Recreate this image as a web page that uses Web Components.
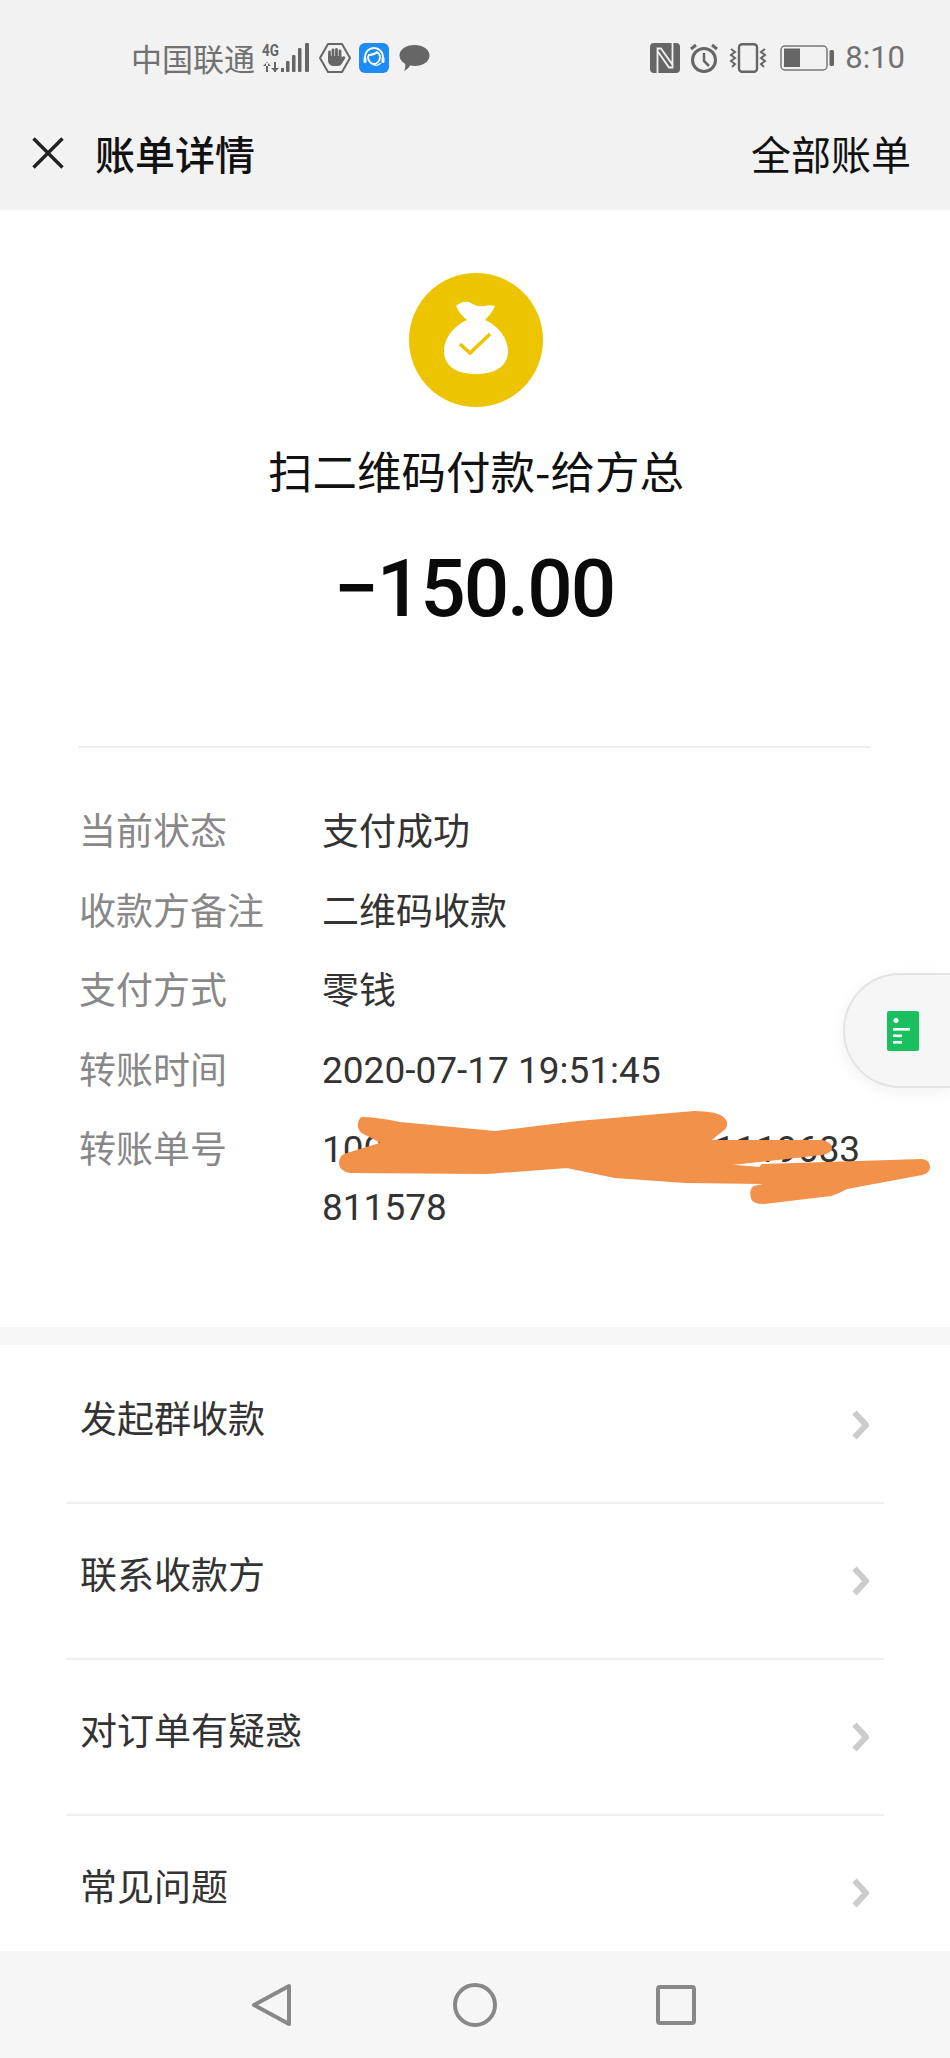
<!DOCTYPE html>
<html lang="zh">
<head>
<meta charset="utf-8">
<title>账单详情</title>
<style>
  html, body { margin: 0; padding: 0; background: #fff; }
  body { font-family: "Noto Sans CJK SC", "Noto Sans", sans-serif; }
  bill-page { width: 950px; height: 2058px; }
</style>
</head>
<body>
<bill-page>
  <status-bar carrier="中国联通" time="8:10"></status-bar>
  <nav-header heading="账单详情" action="全部账单"></nav-header>
  <bill-summary heading="扫二维码付款-给方总" amount="−150.00"></bill-summary>
  <bill-details>
    <detail-row label="当前状态">支付成功</detail-row>
    <detail-row label="收款方备注">二维码收款</detail-row>
    <detail-row label="支付方式">零钱</detail-row>
    <detail-row label="转账时间"><span class="num">2020-07-17 19:51:45</span></detail-row>
    <detail-row label="转账单号"><order-number start="100" end="1119683" last="811578"></order-number></detail-row>
  </bill-details>
  <link-list>
    <link-row>发起群收款</link-row>
    <link-row>联系收款方</link-row>
    <link-row>对订单有疑惑</link-row>
    <link-row>常见问题</link-row>
  </link-list>
  <system-nav></system-nav>
  <float-button></float-button>
  <paint-scribble></paint-scribble>
</bill-page>

<script>
const FONT = '"Noto Sans CJK SC", "Noto Sans", sans-serif';

class BillPage extends HTMLElement {
  constructor() {
    super();
    this.attachShadow({ mode: 'open' });
    this.shadowRoot.innerHTML = `
      <style>
        :host {
          display: flex;
          flex-direction: column;
          position: relative;
          overflow: hidden;
          background: #fff;
          font-family: ${FONT};
        }
      </style>
      <slot></slot>
    `;
  }
}

class StatusBar extends HTMLElement {
  constructor() {
    super();
    this.attachShadow({ mode: 'open' });
    this.shadowRoot.innerHTML = `
      <style>
        :host {
          display: flex;
          align-items: center;
          justify-content: space-between;
          height: 116px;
          padding: 0 45px 0 131px;
          background: #f2f2f2;
          color: #717171;
        }
        .group { display: flex; align-items: center; }
        .carrier { font-size: 31px; line-height: 44px; margin-right: 7px; }
        .time { font: 400 31px/44px Roboto, sans-serif; margin-left: 10px; }
        svg { display: block; flex: none; }
        .signal { width: 48px; height: 32px; }
        .hand { width: 32px; height: 32px; margin-left: 9px; }
        .app { width: 30px; height: 30px; margin-left: 8px; }
        .bubble { width: 31px; height: 28px; margin-left: 10px; }
        .nfc { width: 30px; height: 30px; }
        .alarm { width: 30px; height: 32px; margin-left: 9px; }
        .vibrate { width: 38px; height: 30px; margin-left: 10px; }
        .battery { width: 55px; height: 26px; margin-left: 13px; }
      </style>
      <div class="group">
        <span class="carrier"></span>
        <svg class="signal" viewBox="0 0 48 32" fill="#666">
          <text x="0" y="14" font-family="Roboto, sans-serif" font-size="17" font-weight="700" textLength="17" lengthAdjust="spacingAndGlyphs">4G</text>
          <path d="M4 20v10h2V20zM1 24l4-4 4 4zM12 20v10h2V20zM9 26l4 4 4-4z"/>
          <rect x="19" y="26" width="3" height="4"/>
          <rect x="24" y="19" width="3.5" height="11" rx="1"/>
          <rect x="30" y="13" width="3.5" height="17" rx="1"/>
          <rect x="36" y="6" width="3.5" height="24" rx="1"/>
          <rect x="43" y="1" width="4" height="29" rx="1"/>
        </svg>
        <svg class="hand" viewBox="0 0 32 32">
          <path d="M9 2h14l8 14-8 14H9L1 16z" fill="none" stroke="#666" stroke-width="2" stroke-linejoin="round"/>
          <path d="M10.500 16V10M14 15V8M17.500 15V7.500M21 15V9" fill="none" stroke="#666" stroke-width="2.800" stroke-linecap="round"/>
          <path d="M9 14h13.500v1.500l1.500-1c1.500-.8 3 .7 2 2l-3 5c-1 1.700-2.200 2.500-4.500 2.500h-3c-4 0-6.500-2-6.500-6z" fill="#666"/>
        </svg>
        <svg class="app" viewBox="0 0 30 30">
          <rect width="30" height="30" rx="6" fill="#1e8cf5"/>
          <path d="M6 17v-3c0-5 4-9 9-9s9 4 9 9v3" fill="none" stroke="#fff" stroke-width="2"/>
          <path d="M10 12c3 0 6-1 8-3 1.500 1 3 2 3 5 0 4-3 7-6 7s-6-3-6-7z" fill="#1e8cf5" stroke="#fff" stroke-width="1.800"/>
          <rect x="4.500" y="14" width="3" height="6" rx="1.500" fill="#fff"/>
          <rect x="22.500" y="14" width="3" height="6" rx="1.500" fill="#fff"/>
          <path d="M12 20c3 3 7 3 10 0" fill="none" stroke="#fff" stroke-width="1.500"/>
        </svg>
        <svg class="bubble" viewBox="0 0 31 28">
          <path d="M15.500 1C24 1 30.500 5.500 30.500 11.500S24 22 15.500 22c-1.500 0-3-.1-4.300-.4C9.500 24 7.500 26 5 27c1-2 1.500-4 1.300-7C2.800 18 .5 15 .5 11.500.5 5.500 7 1 15.500 1z" fill="#666"/>
        </svg>
      </div>
      <div class="group">
        <svg class="nfc" viewBox="0 0 30 30">
          <rect width="30" height="30" rx="4" fill="#666"/>
          <path d="M7.500 30V5.500h3.500l12 17M22.500 0v24.500H19L7.500 8" fill="none" stroke="#f2f2f2" stroke-width="1.800"/>
        </svg>
        <svg class="alarm" viewBox="0 0 30 32" fill="none" stroke="#666">
          <circle cx="15" cy="18" r="11.500" stroke-width="3"/>
          <path d="M15 11v8l5 5" stroke-width="2.500"/>
          <path d="M2 7l5-4M28 7l-5-4" stroke-width="3"/>
        </svg>
        <svg class="vibrate" viewBox="0 0 38 30" fill="none" stroke="#666">
          <rect x="10" y="1.200" width="18" height="27.600" rx="3" stroke-width="2.400"/>
          <path d="M2 6l4 3-4 3 4 3-4 3 4 3-3 3M36 6l-4 3 4 3-4 3 4 3-4 3 3 3" stroke-width="2"/>
        </svg>
        <svg class="battery" viewBox="0 0 55 26">
          <rect x="1" y="1" width="46" height="24" rx="4" fill="none" stroke="#777" stroke-width="1.500"/>
          <rect x="4" y="3.500" width="16" height="18.500" fill="#666"/>
          <rect x="49.500" y="5" width="4.500" height="16" rx="1.500" fill="#666"/>
        </svg>
        <span class="time"></span>
      </div>
    `;
    this.shadowRoot.querySelector('.carrier').textContent = this.getAttribute('carrier');
    this.shadowRoot.querySelector('.time').textContent = this.getAttribute('time');
  }
}

class NavHeader extends HTMLElement {
  constructor() {
    super();
    this.attachShadow({ mode: 'open' });
    this.shadowRoot.innerHTML = `
      <style>
        :host {
          display: flex;
          align-items: center;
          height: 74px;
          padding: 0 39px 20px 32px;
          background: #f2f2f2;
          color: #111;
        }
        svg { display: block; width: 32px; height: 32px; }
        h1 { flex: 1; margin: 0 0 0 31px; font-size: 40px; line-height: 74px; font-weight: 500; }
        span { font-size: 40px; line-height: 74px; }
      </style>
      <svg viewBox="0 0 32 32"><path d="M1.500 1.500l29 29M30.500 1.500l-29 29" stroke="#222" stroke-width="3.400" fill="none"/></svg>
      <h1></h1>
      <span></span>
    `;
    this.shadowRoot.querySelector('h1').textContent = this.getAttribute('heading');
    this.shadowRoot.querySelector('span').textContent = this.getAttribute('action');
  }
}

class BillSummary extends HTMLElement {
  constructor() {
    super();
    this.attachShadow({ mode: 'open' });
    this.shadowRoot.innerHTML = `
      <style>
        :host {
          display: flex;
          flex-direction: column;
          align-items: center;
          margin: 0 79px;
          padding: 63px 0 0 2px;
          height: 473px;
          border-bottom: 2px solid #eeeeee;
          color: #111;
        }
        svg { display: block; width: 134px; height: 134px; }
        .heading { margin-top: 25px; font-size: 44.500px; line-height: 76px; }
        .amount {
          margin-top: 31px;
          margin-right: 4px;
          font: 500 80px/100px Roboto, sans-serif;
          letter-spacing: -2px;
          color: #0a0a0a;
        }
      </style>
      <svg viewBox="0 0 134 134">
        <circle cx="67" cy="67" r="67" fill="#ecc400"/>
        <path d="M47 33c3-3 8-5 13-4 5 3 9 5 15 4 4-1 8-1 11 0-2 5-6 10-10 14 14 6 23 19 23 31 0 14-11 23-32 23s-32-9-32-23c0-12 9-25 23-31-5-4-9-9-11-14z" fill="#fff"/>
        <path d="M51 71l10 9 20-19" fill="none" stroke="#ecc400" stroke-width="3.600"/>
      </svg>
      <div class="heading"></div>
      <div class="amount"></div>
    `;
    this.shadowRoot.querySelector('.heading').textContent = this.getAttribute('heading');
    this.shadowRoot.querySelector('.amount').textContent = this.getAttribute('amount');
  }
}

class BillDetails extends HTMLElement {
  constructor() {
    super();
    this.attachShadow({ mode: 'open' });
    this.shadowRoot.innerHTML = `
      <style>
        :host {
          display: flex;
          flex-direction: column;
          gap: 21.500px;
          padding: 52px 79px 93px 79px;
        }
      </style>
      <slot></slot>
    `;
  }
}

class DetailRow extends HTMLElement {
  constructor() {
    super();
    this.attachShadow({ mode: 'open' });
    this.shadowRoot.innerHTML = `
      <style>
        :host {
          display: grid;
          grid-template-columns: 243px 1fr;
          font-size: 37px;
          line-height: 58px;
        }
        .label { color: #888888; }
        .value { color: #333333; }
        ::slotted(.num) {
          display: block;
          font-family: Roboto, sans-serif;
          font-size: 37px;
          line-height: 64px;
          margin-bottom: -6px;
        }
      </style>
      <div class="label"></div>
      <div class="value"><slot></slot></div>
    `;
    this.shadowRoot.querySelector('.label').textContent = this.getAttribute('label');
  }
}

// the middle of the number is painted over in the screenshot, only the visible digits are kept
class OrderNumber extends HTMLElement {
  constructor() {
    super();
    this.attachShadow({ mode: 'open' });
    this.shadowRoot.innerHTML = `
      <style>
        :host {
          display: block;
          padding-top: 3px;
          margin-bottom: -3px;
          font-family: Roboto, sans-serif;
          font-size: 37px;
          line-height: 58px;
          color: #333333;
        }
        .first { display: flex; justify-content: space-between; width: 538px; }
      </style>
      <div class="first"><span class="start"></span><span class="end"></span></div>
      <div class="last"></div>
    `;
    this.shadowRoot.querySelector('.start').textContent = this.getAttribute('start');
    this.shadowRoot.querySelector('.end').textContent = this.getAttribute('end');
    this.shadowRoot.querySelector('.last').textContent = this.getAttribute('last');
  }
}

class LinkList extends HTMLElement {
  constructor() {
    super();
    this.attachShadow({ mode: 'open' });
    this.shadowRoot.innerHTML = `
      <style>
        :host {
          display: block;
          flex: 1;
          min-height: 0;
          overflow: hidden;
          border-top: 18px solid #f7f7f7;
          padding: 3px 66px 0;
        }
      </style>
      <slot></slot>
    `;
  }
}

class LinkRow extends HTMLElement {
  constructor() {
    super();
    this.attachShadow({ mode: 'open' });
    this.shadowRoot.innerHTML = `
      <style>
        :host {
          display: flex;
          justify-content: space-between;
          height: 154px;
          padding: 0 15px 0 14px;
          border-bottom: 2px solid #f0f0f0;
          font-size: 37px;
          line-height: 138px;
          color: #333333;
        }
        :host(:last-child) { border-bottom: none; }
        svg { display: block; width: 17px; height: 30px; margin-top: 62px; }
      </style>
      <span><slot></slot></span>
      <svg viewBox="0 0 17 30"><path d="M2.500 2.500L14 15 2.500 27.500" fill="none" stroke="#cccccc" stroke-width="6"/></svg>
    `;
  }
}

class SystemNav extends HTMLElement {
  constructor() {
    super();
    this.attachShadow({ mode: 'open' });
    this.shadowRoot.innerHTML = `
      <style>
        :host {
          display: flex;
          justify-content: center;
          align-items: center;
          flex: none;
          height: 107px;
          gap: 158px;
          background: #f6f6f6;
        }
        svg { display: block; width: 44px; height: 44px; }
      </style>
      <svg viewBox="0 0 44 44"><path d="M38 3L3 22l35 19z" fill="none" stroke="#888" stroke-width="4" stroke-linejoin="round"/></svg>
      <svg viewBox="0 0 44 44"><circle cx="22" cy="22" r="20" fill="none" stroke="#888" stroke-width="4"/></svg>
      <svg viewBox="0 0 44 44"><rect x="3" y="4" width="36" height="36" rx="2" fill="none" stroke="#888" stroke-width="4"/></svg>
    `;
  }
}

class FloatButton extends HTMLElement {
  constructor() {
    super();
    this.attachShadow({ mode: 'open' });
    this.shadowRoot.innerHTML = `
      <style>
        :host {
          position: absolute;
          left: 843px;
          top: 973px;
          width: 107px;
          height: 115px;
          box-sizing: border-box;
          display: flex;
          align-items: center;
          padding-left: 42px;
          background: #f6f6f6;
          border: 2px solid #e4e4e4;
          border-right: none;
          border-radius: 57px 0 0 57px;
          box-shadow: 0 4px 16px rgba(0, 0, 0, 0.06);
        }
        svg { display: block; width: 32px; height: 40px; }
      </style>
      <svg viewBox="0 0 32 40">
        <rect width="32" height="40" rx="2" fill="#19c060"/>
        <circle cx="9" cy="9.500" r="2.500" fill="#fff"/>
        <rect x="6" y="17" width="17" height="2.600" fill="#fff"/>
        <rect x="6" y="23.500" width="9" height="2.600" fill="#fff"/>
        <rect x="6" y="30" width="9" height="2.600" fill="#fff"/>
      </svg>
    `;
  }
}

class PaintScribble extends HTMLElement {
  constructor() {
    super();
    this.attachShadow({ mode: 'open' });
    this.shadowRoot.innerHTML = `
      <style>
        :host { position: absolute; left: 0; top: 0; width: 950px; height: 2058px; pointer-events: none; }
        svg { display: block; width: 950px; height: 2058px; }
      </style>
      <svg viewBox="0 0 950 2058">
        <path fill="#f2914a" stroke="#f2914a" stroke-width="2" stroke-linejoin="round"
          d="M362 1118Q375 1118 400 1123L495 1132 578 1122 694 1112Q716 1112 723 1118 728 1122 725 1128L709 1141 822 1141Q831 1143 831 1148 831 1152 822 1154L723 1165 760 1168 762 1165 922 1160Q929 1161 929 1167 929 1172 922 1174L847 1188Q840 1192 831 1195L764 1203Q753 1203 752 1198 750 1190 754 1187L772 1183 685 1182 615 1177 567 1167 487 1173 350 1172Q340 1170 340 1163 340 1158 344 1155L383 1143 362 1132Q358 1128 359 1123 360 1119 362 1118Z"/>
      </svg>
    `;
  }
}

customElements.define('bill-page', BillPage);
customElements.define('status-bar', StatusBar);
customElements.define('nav-header', NavHeader);
customElements.define('bill-summary', BillSummary);
customElements.define('bill-details', BillDetails);
customElements.define('detail-row', DetailRow);
customElements.define('order-number', OrderNumber);
customElements.define('link-list', LinkList);
customElements.define('link-row', LinkRow);
customElements.define('system-nav', SystemNav);
customElements.define('float-button', FloatButton);
customElements.define('paint-scribble', PaintScribble);
</script>
</body>
</html>
